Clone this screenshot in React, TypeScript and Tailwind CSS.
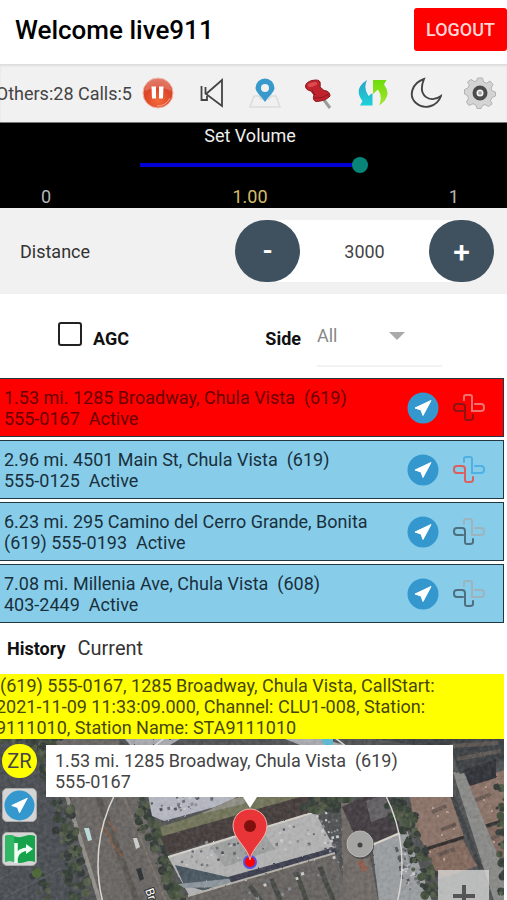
import { useState, type ReactNode } from "react";

type Call = { first: string; second: string; active?: boolean; left: string; right: string };

const calls: Call[] = [
  { first: "1.53 mi. 1285 Broadway, Chula Vista\u00a0 (619)", second: "555-0167\u00a0 Active", active: true, left: "#8c1414", right: "#ee7272" },
  { first: "2.96 mi. 4501 Main St, Chula Vista\u00a0 (619)", second: "555-0125\u00a0 Active", left: "#d9605f", right: "#4fb0e3" },
  { first: "6.23 mi. 295 Camino del Cerro Grande, Bonita", second: "(619) 555-0193\u00a0 Active", left: "#4d6f80", right: "#9db3bd" },
  { first: "7.08 mi. Millenia Ave, Chula Vista\u00a0 (608)", second: "403-2449\u00a0 Active", left: "#4d6f80", right: "#9db3bd" },
];

function NavigateIcon({ className }: { className: string }) {
  return (
    <svg viewBox="0 0 32 32" className={className} aria-hidden="true">
      <circle cx="16" cy="16" r="15.5" fill="#3498ce" />
      <path d="M24 8.500 8 16 14 18 16 23.500Z" fill="#fff" stroke="#fff" strokeLinejoin="round" />
    </svg>
  );
}

function StrandIcon({ left, right }: { left: string; right: string }) {
  return (
    <svg viewBox="0 0 32 29" className="h-[29px] w-8" fill="none" strokeWidth="2" strokeLinecap="round" aria-hidden="true">
      <path d="M11 7V4Q11 2 13 2H17Q19 2 19 4V18H28Q31 18 31 15V14Q31 11 28 11H22" stroke={right} />
      <path d="M10 18H4Q1 18 1 15V14Q1 11 4 11H9Q12 11 12 14V25Q12 27 14 27H17Q20 27 20 25V22" stroke={left} />
    </svg>
  );
}

function ToolButton({ label, children }: { label: string; children: ReactNode }) {
  return (
    <button type="button" aria-label={label} className="h-8 w-8 shrink-0">
      <svg viewBox="0 0 32 32" className="h-8 w-8" aria-hidden="true">
        {children}
      </svg>
    </button>
  );
}

function Toolbar() {
  return (
    <div className="flex h-[59px] shrink-0 items-center overflow-hidden border-b border-[#777] bg-[#f1f1f1] pr-[11px] shadow-[inset_0_2px_2px_#dddddd]">
      <div className="flex w-[132px] shrink-0 justify-end">
        <span className="whitespace-nowrap text-[18px] text-[#444]">Others:28 Calls:5</span>
      </div>
      <div className="ml-[10px] flex flex-1 items-center justify-between">
        <ToolButton label="Pause">
          <defs>
            <radialGradient id="pause" cx="50%" cy="75%" r="75%">
              <stop offset="0" stopColor="#f46a3a" />
              <stop offset="0.600" stopColor="#dc4428" />
              <stop offset="1" stopColor="#d8614a" />
            </radialGradient>
          </defs>
          <circle cx="16" cy="16" r="15" fill="url(#pause)" stroke="#efb3a2" strokeWidth="1" />
          <path d="M3 14A13 13 0 0 1 29 14Q16 7 3 14Z" fill="#fff" opacity="0.180" />
          <path d="M9.500 9.500h4.500v12h-4zM17 9.500h4.500l-0.500 12h-4z" fill="#fff" />
          <path d="M28 21Q24 29 15 29" stroke="#f9a58c" fill="none" />
        </ToolButton>
        <ToolButton label="Mute">
          <g fill="none" stroke="#444" strokeWidth="1.800">
            <path d="M26 3V29L10 17Z" />
            <path d="M9.500 17V10M5.500 9V23H11V19" />
          </g>
        </ToolButton>
        <ToolButton label="Map location">
          <path d="M5 19H10L12 22H20L22 19H27L31 30H1Z" fill="#f0f0f0" stroke="#dcdcdc" strokeWidth="1.500" />
          <path fillRule="evenodd" d="M16 1.500A9.500 9.500 0 0 0 6.500 11C6.500 15 13 20 16 25C19 20 25.500 15 25.500 11A9.500 9.500 0 0 0 16 1.500ZM16 7A4 4 0 1 1 16 15A4 4 0 0 1 16 7Z" fill="#3899cd" />
        </ToolButton>
        <ToolButton label="Pin">
          <path d="M21 23 27 31" stroke="#9b9b9b" strokeWidth="3" />
          <path d="M2.500 9Q3 5 9 3.500Q16 2 17 5Q17.500 8 17 10L21 13.500Q27 14 27 19Q23 24 13 24.500Q9 23 11 18L8 14Q2.500 13 2.500 9Z" fill="#c0232b" stroke="#8b171d" />
          <path d="M9 13 12 18M11 21Q19 22 26 17" stroke="#8f181f" fill="none" />
          <ellipse cx="9.500" cy="7.500" rx="5" ry="2" fill="#dd4a4f" transform="rotate(-16 9.500 7.500)" />
        </ToolButton>
        <ToolButton label="Refresh">
          <defs>
            <linearGradient id="cyan" x2="0" y2="1">
              <stop stopColor="#2ba3c7" />
              <stop offset="1" stopColor="#1cd2d8" />
            </linearGradient>
            <linearGradient id="lime" x2="0" y2="1">
              <stop stopColor="#6fdc0c" />
              <stop offset="1" stopColor="#a5e52d" />
            </linearGradient>
          </defs>
          <path d="M10 3Q-4 12 5.500 24L3 28.500H15.500V16L11.500 19Q6 11 10 3Z" fill="url(#cyan)" />
          <path d="M16 17V3H29.500L27 7.500Q36 19 22 28.500Q26 20 21 12.500Z" fill="url(#lime)" />
        </ToolButton>
        <ToolButton label="Night mode">
          <path d="M14 2C2 6-2 19 6 26C14 33 27 30 31 19C20 27 7 19 14 2Z" fill="none" stroke="#444" strokeWidth="1.900" />
        </ToolButton>
        <ToolButton label="Settings">
          <path d="M13.500 1h5l1 4 3 1.300L26 4l3 3.500-2 3.500 1 3 3.500 1v4l-3.500 1.500-1.500 3L28 27l-3.500 2.500-3.500-2-2.500 1L17 31.500h-4l-1-3.500-3-1.300L5 28.500 2.500 25l2-3.500-1-3L.5 17v-4.500L4 11l1.300-3L3.500 5 7 2.500l3.500 2L12.500 4Z" fill="#d4d4d4" stroke="#b2b2b2" />
          <circle cx="16" cy="16" r="5.500" fill="#f4f4f4" stroke="#4b4b4b" strokeWidth="4" />
          <circle cx="16" cy="16" r="2" fill="#aaa" />
        </ToolButton>
      </div>
    </div>
  );
}

/* Pseudo-random scatter used for foliage, parked cars and roof vents. */
function scatter(seed: number, count: number, from: [number, number], to: [number, number], spread: number) {
  let s = seed;
  const next = () => {
    s = (s * 16807) % 2147483647;
    return s / 2147483647;
  };
  return Array.from({ length: count }, () => {
    const t = next();
    return {
      x: from[0] + (to[0] - from[0]) * t + (next() - 0.5) * spread,
      y: from[1] + (to[1] - from[1]) * t + (next() - 0.5) * spread,
      r: 1 + next() * 3.5,
      k: Math.floor(next() * 4),
    };
  });
}

const greens = ["#39423a", "#45503e", "#535b49", "#353b39"];
const roofTones = ["#6b6d72", "#c8c8c8", "#54565d", "#8b8c90"];

type ScatterProps = { seed: number; count: number; from: [number, number]; to: [number, number]; spread: number };

function Foliage({ seed, count, from, to, spread }: ScatterProps) {
  return (
    <g>
      {scatter(seed, count, from, to, spread).map((d, i) => (
        <circle key={i} cx={d.x} cy={d.y} r={d.r} fill={greens[d.k]} />
      ))}
    </g>
  );
}

function Specks({ seed, count, from, to, spread }: ScatterProps) {
  return (
    <g>
      {scatter(seed, count, from, to, spread).map((d, i) => (
        <rect key={i} x={d.x} y={d.y} width={1 + d.r / 2} height={1 + d.r / 2} fill={roofTones[d.k]} transform={`rotate(-18 ${d.x} ${d.y})`} />
      ))}
    </g>
  );
}

function SatelliteMap() {
  return (
    <svg viewBox="0 0 504 161" preserveAspectRatio="xMidYMin slice" className="absolute inset-0 h-full w-full" aria-label="Satellite map">
      <defs>
        <filter id="grain" x="0" y="0" width="100%" height="100%" colorInterpolationFilters="sRGB">
          <feTurbulence type="fractalNoise" baseFrequency="0.250" numOctaves="2" seed="4" result="n" />
          <feDisplacementMap in="SourceGraphic" in2="n" scale="2" result="d" />
          <feColorMatrix in="n" type="matrix" values="1 0 0 0 0.100  1 0 0 0 0.100  1 0 0 0 0.100  0 0 0 0 0.300" result="g" />
          <feBlend in="g" in2="d" mode="soft-light" />
        </filter>
      </defs>
      <g filter="url(#grain)">
        <rect x="-10" y="-10" width="524" height="181" fill="#505254" />
        <path d="M-5 0H45L90 170H-5Z" fill="#4b4e53" />
        <path d="M0 128 40 100M0 140 50 112M5 158 60 130" stroke="#5a5e63" fill="none" />
        {/* Broadway and its kerbs */}
        <path d="M55 0H118L178 170H100Z" fill="#686562" />
        <path d="M64 48 102 170" stroke="#918e89" strokeWidth="4" />
        <path d="M90 35 140 170" stroke="#5b5753" strokeWidth="6" />
        <path d="M101 87 112 100M108 82 116 93M110 102 123 118" stroke="#7c5a45" strokeWidth="2" />
        <path d="M123 56 169 170" stroke="#777068" strokeWidth="2" />
        <Foliage seed={17} count={130} from={[45, 0]} to={[79, 150]} spread={22} />
        <Foliage seed={7} count={28} from={[0, 6]} to={[60, 6]} spread={18} />
        <Foliage seed={71} count={14} from={[35, 135]} to={[50, 160]} spread={16} />
        <Foliage seed={9} count={70} from={[128, 0]} to={[152, 105]} spread={18} />
        <Foliage seed={19} count={60} from={[155, 95]} to={[178, 161]} spread={14} />
        <circle cx="37" cy="134" r="5" fill="#4c6638" />
        {/* Warehouses north of the marker */}
        <path d="M125 0H180L170 6H130ZM285 0H322L345 6H300Z" fill="#a5a7ad" />
        <path d="M321 0H333V6H324Z" fill="#5ab6cf" />
        <path d="M148 56H245L215 68 164 82 152 77Z" fill="#b2b4be" />
        <Specks seed={3} count={24} from={[152, 67]} to={[205, 62]} spread={14} />
        <path d="M160 88 215 70 240 56H315L163 99Z" fill="#71735a" />
        <path d="M160 98 310 55 348 56 320 72 168 115Z" fill="#463f3e" />
        <path d="M200 75 232 60 262 56 240 66Z" fill="#8c8c83" />
        {/* White rooftop car park */}
        <path d="M168 118 315 73 334 108 190 158Z" fill="#b0b0b0" />
        <path d="M168 118 315 73" stroke="#d2cec6" strokeWidth="2" />
        <path d="M210 107 262 91 275 110 225 128Z" fill="#9c9d9d" />
        <Specks seed={42} count={44} from={[185, 120]} to={[315, 90]} spread={22} />
        <path d="M175 126 232 139 205 152 184 146Z" fill="#4a5760" />
        <path d="M178 145 236 139 225 148 184 149Z" fill="#8a949a" />
        <path d="M228 138 335 108 337 115 234 148Z" fill="#3e3f4e" />
        <path d="M186 171V158L335 114 353 171Z" fill="#676360" />
        <path d="M188 157 335 114" stroke="#b4b0a8" strokeWidth="2" />
        <path d="M250 147 268 171M271 140 285 171M296 133 310 171M320 128 337 171" stroke="#484a45" strokeWidth="5" />
        <Specks seed={58} count={22} from={[240, 154]} to={[335, 130]} spread={20} />
        <Specks seed={64} count={55} from={[325, 75]} to={[340, 120]} spread={22} />
        <Foliage seed={83} count={50} from={[308, 68]} to={[348, 60]} spread={14} />
        {/* Roundabout lot */}
        <path d="M341 64H360L380 171H344Z" fill="#706a66" />
        <path d="M342 68 370 55H386L402 91 377 103 354 95Z" fill="#443e42" />
        <path d="M366 62 384 56 393 75 371 83Z" fill="#636064" />
        <path d="M372 106 407 91 435 171H380Z" fill="#989c9e" />
        <path d="M372 106 407 91" stroke="#d7d3c9" strokeWidth="2" />
        <path d="M396 108 404 130M399 118 402 140" stroke="#55585e" strokeWidth="3" strokeDasharray="5 4" />
        <Specks seed={29} count={34} from={[400, 110]} to={[416, 158]} spread={12} />
        <path d="M359 122 366 132" stroke="#8c5e50" strokeWidth="6" />
        {/* Housing blocks */}
        <path d="M410 58 450 56 464 98 426 110 415 91Z" fill="#897267" />
        <path d="M426 111 463 101 477 127 439 140Z" fill="#82695e" />
        <path d="M466 45 514 27V79L479 88Z" fill="#897267" />
        <path d="M480 92 514 80V114L489 124Z" fill="#80695e" />
        <path d="M426 110 464 98M479 89 514 78" stroke="#332f2f" strokeWidth="3" />
        <path d="M432 73 446 67M474 62 491 55M441 91 456 85M438 116 455 110M483 103 500 96" stroke="#665851" strokeWidth="4" />
        <path d="M453 33 464 34 514 155V171H497Z" fill="#888886" />
        <path d="M452 56 481 130" stroke="#3f4244" strokeWidth="4" />
        <path d="M345 -5H514V18L460 35 452 12Z" fill="#3f4245" />
        <path d="M450 7 498 4M457 20 501 12" stroke="#5c5753" strokeWidth="4" />
        <path d="M464 31 496 20V39L470 47Z" fill="#32343a" />
        <Foliage seed={91} count={120} from={[394, 58]} to={[435, 155]} spread={18} />
        <Foliage seed={31} count={34} from={[500, 48]} to={[503, 161]} spread={8} />
        <g fill="#c2ab9b">
          {[[433, 69], [438, 77], [447, 73], [442, 96], [454, 90], [430, 113], [444, 120], [484, 61], [492, 72], [486, 48], [494, 103]].map(([x, y]) => (
            <circle key={`${x}-${y}`} cx={x} cy={y} r="1" />
          ))}
        </g>
      </g>
      <path d="m84 89 5 0 3 12-4 1Z" fill="#b9d9db" />
      <path d="m133 99 4 0 3 9-4 2Z" fill="#cccdcb" />
      <path d="m136 130 5-1 3 11-4 2Z" fill="#313739" />
      <circle cx="250" cy="125" r="152" fill="none" stroke="#d9d7d3" strokeWidth="1.500" />
      <circle cx="361" cy="107" r="13" fill="#4e4e50" />
      <circle cx="360" cy="105" r="13" fill="#a5a5a3" stroke="#bbb9b5" />
      <circle cx="360" cy="106" r="2.500" fill="#444" />
      <text x="145" y="151" transform="rotate(70 145 151)" className="fill-white font-[Roboto] text-[12px]" stroke="#333" strokeWidth="2" paintOrder="stroke">Br</text>
      <circle cx="250" cy="123" r="6" fill="#ff0000" stroke="#574de2" strokeWidth="2" />
      <path d="M250 121C248 108 233 100 233 87A17 17 0 0 1 267 87C267 100 252 108 250 121Z" fill="#e93438" stroke="#f3b3ad" strokeWidth="1" />
      <circle cx="250" cy="87" r="6" fill="#7e100e" />
    </svg>
  );
}

export default function App() {
  const [volume, setVolume] = useState(1);
  const [distance, setDistance] = useState(3000);
  return (
    <div className="flex h-screen min-h-[860px] flex-col overflow-hidden bg-white font-[Roboto,sans-serif] text-[18px] leading-[21px] text-[#222]">
      <header className="flex h-16 shrink-0 items-start justify-between pt-2 pl-[15px]">
        <h1 className="pt-[6px] text-[26px] leading-8 font-medium text-black">Welcome live911</h1>
        <button type="button" className="h-[43px] w-[93px] rounded-[3px] bg-[#ff0000] text-[18px] font-medium text-[#ffd6d6]">LOGOUT</button>
      </header>

      <Toolbar />

      <section className="h-[85px] shrink-0 bg-black pr-[7px]">
        <label htmlFor="volume" className="block pt-[2px] text-center text-[#eee]">Set Volume</label>
        <input
          id="volume"
          type="range"
          min={0}
          max={1}
          step={0.01}
          value={volume}
          onChange={(e) => setVolume(Number(e.target.value))}
          className="mx-auto mt-[11px] block h-4 w-[236px] appearance-none bg-transparent [&::-webkit-slider-runnable-track]:h-[4px] [&::-webkit-slider-runnable-track]:bg-[linear-gradient(to_right,transparent_8px,#0000d4_8px)] [&::-webkit-slider-thumb]:-mt-[6px] [&::-webkit-slider-thumb]:size-4 [&::-webkit-slider-thumb]:appearance-none [&::-webkit-slider-thumb]:rounded-full [&::-webkit-slider-thumb]:bg-[#088577]"
        />
        <div className="mt-[13px] flex justify-between px-[41px] text-[#b5b5b5]">
          <span>0</span>
          <output htmlFor="volume" className="text-[#d6bd6b]">{volume.toFixed(2)}</output>
          <span>1</span>
        </div>
      </section>

      <section className="flex h-[86px] shrink-0 items-center justify-between bg-[#f1f1f1] pr-[13px] pl-5">
        <label htmlFor="distance" className="text-[#333]">Distance</label>
        <div className="flex">
          <button type="button" aria-label="Decrease distance" onClick={() => setDistance(distance - 100)} className="z-10 h-[62px] w-[65px] rounded-full bg-[#3f515f] text-[26px] font-bold text-white">-</button>
          <input id="distance" value={distance} onChange={(e) => setDistance(Number(e.target.value) || 0)} className="-mx-8 h-[62px] w-[193px] bg-white text-center text-[#444]" />
          <button type="button" aria-label="Increase distance" onClick={() => setDistance(distance + 100)} className="z-10 h-[62px] w-[65px] rounded-full bg-[#3f515f] text-[30px] font-medium text-white">+</button>
        </div>
      </section>

      <section className="flex h-[84px] shrink-0 items-center justify-between pr-[65px] pl-[58px]">
        <div className="flex items-center gap-[11px]">
          <input id="agc" type="checkbox" className="mb-1 size-6 appearance-none rounded-[3px] border-2 border-[#222] bg-white checked:bg-[#088577]" />
          <label htmlFor="agc" className="pt-1 font-bold text-[#111]">AGC</label>
        </div>
        <div className="flex items-center gap-4">
          <label htmlFor="side" className="pt-1 font-bold text-[#111]">Side</label>
          <div className="relative">
            <select id="side" className="block h-[62px] w-[125px] appearance-none border-b-2 border-[#f2f2f2] bg-transparent text-[#888]">
              <option>All</option>
            </select>
            <svg viewBox="0 0 16 8" className="pointer-events-none absolute top-[27px] right-[37px] h-2 w-4" aria-hidden="true">
              <path d="M0 0H16L8 8Z" fill="#aaa" />
            </svg>
          </div>
        </div>
      </section>

      <ul className="mr-[3px] flex shrink-0 flex-col gap-[3px]">
        {calls.map((c) => (
          <li key={c.second} className={`flex h-[59px] items-center justify-between border-y border-r border-[#223840] pr-[18px] pl-1 ${c.active ? "bg-[#ff0000] text-[#690000]" : "bg-[#87cdea] text-[#19303c]"}`}>
            <p>
              {c.first}
              <br />
              {c.second}
            </p>
            <div className="flex items-center gap-[14px]">
              <button type="button" aria-label="Navigate"><NavigateIcon className="size-8" /></button>
              <button type="button" aria-label="Connect"><StrandIcon left={c.left} right={c.right} /></button>
            </div>
          </li>
        ))}
      </ul>

      <nav className="flex h-[51px] shrink-0 items-center gap-3 pl-[7px]">
        <button type="button" className="font-bold text-[#111]">History</button>
        <button type="button" className="text-[20px] text-[#333]">Current</button>
      </nav>

      <p className="mr-[3px] shrink-0 overflow-hidden bg-[#ffff00] py-px text-[#46460c]">
        <span className="-ml-1 block whitespace-nowrap">
          <span className="pl-1">(619) 555-0167, 1285 Broadway, Chula Vista, CallStart:</span>
          <br />
          2021-11-09 11:33:09.000, Channel: CLU1-008, Station:
          <br />
          9111010, Station Name: STA9111010
        </span>
      </p>

      <div className="relative mr-[3px] flex-1 overflow-hidden bg-[#4b4d4f]">
        <SatelliteMap />
        <div className="absolute top-[5px] left-[2px] flex flex-col gap-[10px]">
          <button type="button" className="h-[34px] w-[35px] rounded-full bg-[#ffff00] text-[20px] text-[#444]">ZR</button>
          <button type="button" aria-label="Navigate to call" className="flex h-[34px] w-[35px] items-center justify-center rounded-[5px] border border-[#aaa] bg-[#d5d5d5]">
            <NavigateIcon className="size-[31px]" />
          </button>
          <button type="button" aria-label="Directions" className="flex h-[34px] w-[35px] items-center justify-center rounded-[5px] border border-[#aaa] bg-[#d5d5d5]">
            <svg viewBox="0 0 32 30" className="h-[30px] w-8" aria-hidden="true">
              <path d="M1 2Q6 0 11 2.500Q16 4 21 2Q26 0 31 2V28Q26 26 21 28Q16 30 11 28Q6 26 1 28Z" fill="#16a34c" />
              <path d="M1 2Q6 0 10 2V28Q5 26 1 28Z" fill="#32b766" />
              <path d="M12 29V9M12 24Q14 15 25 15" stroke="#f2fff5" strokeWidth="3.500" fill="none" />
              <path d="M22 10 29 15 22 20Z" fill="#f2fff5" />
            </svg>
          </button>
        </div>
        <div className="absolute top-[6px] left-[46px] w-[407px] bg-white py-[5px] pl-[9px] text-[#444]">
          1.53 mi. 1285 Broadway, Chula Vista&nbsp; (619)
          <br />
          555-0167
          <svg viewBox="0 0 14 11" className="absolute top-full left-1/2 h-[11px] w-[14px] -translate-x-1/2" aria-hidden="true">
            <path d="M0 0H14L7 11Z" fill="#fff" />
          </svg>
        </div>
        <button type="button" aria-label="Zoom in" className="absolute top-[131px] right-[15px] flex size-[51px] items-center justify-center bg-[#dddddd]/75">
          <svg viewBox="0 0 24 24" className="size-6" aria-hidden="true">
            <path d="M12 1V23M1 12H23" stroke="#555" strokeWidth="4" />
          </svg>
        </button>
      </div>
    </div>
  );
}
